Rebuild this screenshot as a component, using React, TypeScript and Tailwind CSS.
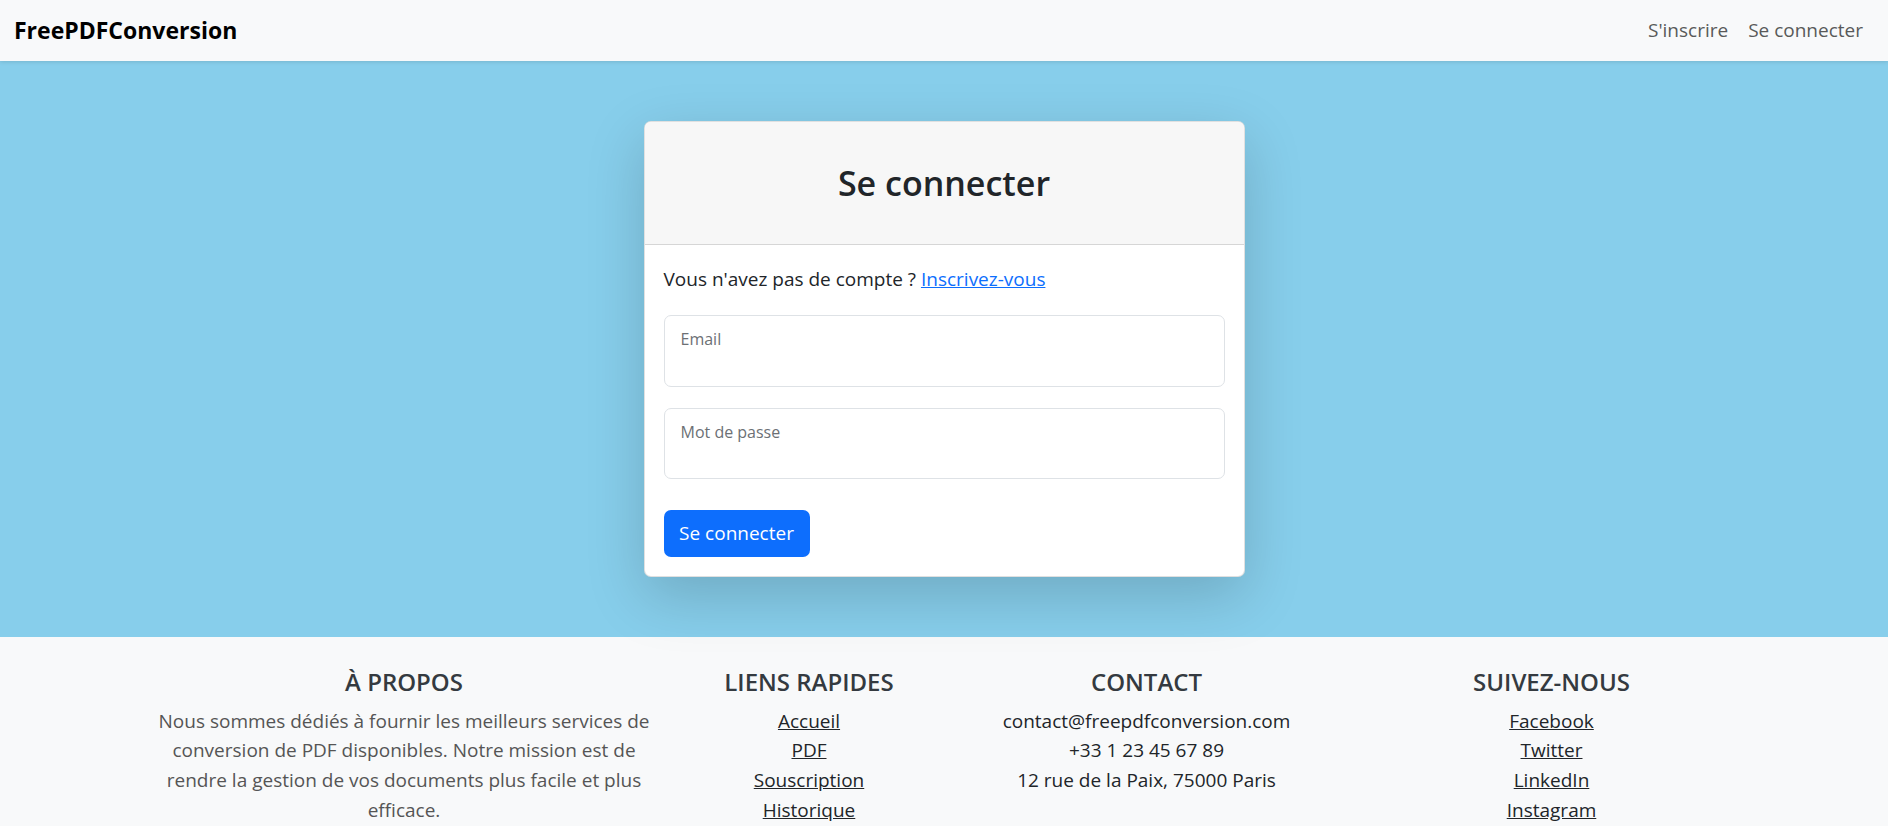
import React from "react";

const quickLinks = ["Accueil", "PDF", "Souscription", "Historique"];
const socialLinks = ["Facebook", "Twitter", "LinkedIn", "Instagram"];

const Navbar = () => (
  <nav className="relative z-10 flex h-[61px] items-center justify-between bg-[#f8f9fa] pl-[14px] pr-[25px] shadow-[0_1px_4px_rgba(0,0,0,0.12)]">
    <a href="#" className="text-[23px] font-bold leading-none text-black">
      FreePDFConversion
    </a>
    <div className="flex gap-[20px] text-[#595959]">
      <a href="#">S'inscrire</a>
      <a href="#">Se connecter</a>
    </div>
  </nav>
);

const LoginCard = () => (
  <div className="w-[601px] overflow-hidden rounded-[7px] border border-[rgba(0,0,0,0.12)] bg-white shadow-[0_19px_58px_rgba(0,0,0,0.175)]">
    <div className="flex h-[123px] items-center justify-center border-b border-[#d6d6d6] bg-[#f7f7f7]">
      <h2 className="text-[34px] font-semibold leading-[1.2] text-[#212529]">
        Se connecter
      </h2>
    </div>
    <div className="px-[19px] pb-[19px] pt-[20px]">
      <p className="mb-[21px]">
        Vous n'avez pas de compte ?{" "}
        <a href="#" className="text-[#0d6efd] underline">
          Inscrivez-vous
        </a>
      </p>
      <div className="mb-[21px] h-[72px] rounded-[7px] border border-[#dee2e6] px-[16px] pt-[8px]">
        <label className="text-[16px] text-[#6c7075]">Email</label>
      </div>
      <div className="mb-[31px] h-[71px] rounded-[7px] border border-[#dee2e6] px-[16px] pt-[8px]">
        <label className="text-[16px] text-[#6c7075]">Mot de passe</label>
      </div>
      <button className="h-[47px] w-[146px] rounded-[7px] bg-[#0d6efd] text-white">
        Se connecter
      </button>
    </div>
  </div>
);

const Footer = () => (
  <footer className="bg-[#f8f9fa] pb-[30px] pt-[31px] leading-[29.8px]">
    <div className="mx-auto grid w-[1620px] grid-cols-12 text-center">
      <div className="col-span-4 px-[14px]">
        <h5 className="mb-[10px] text-[24px] font-semibold uppercase leading-[1.2] text-[#343a40]">
          À propos
        </h5>
        <p className="mx-auto w-[500px] text-[#555]">
          Nous sommes dédiés à fournir les meilleurs services de conversion de
          PDF disponibles. Notre mission est de rendre la gestion de vos
          documents plus facile et plus efficace.
        </p>
      </div>
      <div className="col-span-2 px-[14px]">
        <h5 className="mb-[10px] text-[24px] font-semibold uppercase leading-[1.2] text-[#343a40]">
          Liens rapides
        </h5>
        <ul>
          {quickLinks.map((l) => (
            <li key={l}>
              <a href="#" className="text-[#212529] underline">
                {l}
              </a>
            </li>
          ))}
        </ul>
      </div>
      <div className="col-span-3 px-[14px]">
        <h5 className="mb-[10px] text-[24px] font-semibold uppercase leading-[1.2] text-[#343a40]">
          Contact
        </h5>
        <p>contact@freepdfconversion.com</p>
        <p>+33 1 23 45 67 89</p>
        <p>12 rue de la Paix, 75000 Paris</p>
      </div>
      <div className="col-span-3 px-[14px]">
        <h5 className="mb-[10px] text-[24px] font-semibold uppercase leading-[1.2] text-[#343a40]">
          Suivez-nous
        </h5>
        <ul>
          {socialLinks.map((l) => (
            <li key={l}>
              <a href="#" className="text-[#212529] underline">
                {l}
              </a>
            </li>
          ))}
        </ul>
      </div>
    </div>
  </footer>
);

const App = () => {
  return (
    <div className="min-h-screen font-['Open_Sans',sans-serif] text-[19px] leading-[1.52] text-[#212529]">
      <Navbar />
      <main className="flex justify-center bg-[#87ceeb] py-[60px]">
        <LoginCard />
      </main>
      <Footer />
    </div>
  );
};

export default App;
